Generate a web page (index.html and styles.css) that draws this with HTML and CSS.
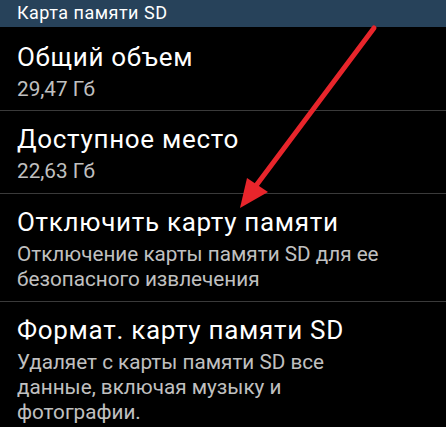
FILE: index.html
```html
<!DOCTYPE html>
<html lang="ru">
<head>
<meta charset="utf-8">
<link rel="stylesheet" href="styles.css">
</head>
<body>
<div class="screen">
  <div class="header">Карта памяти SD</div>
  <div class="list">
    <div class="item first">
      <div class="title">Общий объем</div>
      <div class="sub">29,47 Гб</div>
    </div>
    <div class="item">
      <div class="title">Доступное место</div>
      <div class="sub">22,63 Гб</div>
    </div>
    <div class="item">
      <div class="title">Отключить карту памяти</div>
      <div class="sub">Отключение карты памяти SD для ее<br>безопасного извлечения</div>
    </div>
    <div class="item last">
      <div class="title">Формат. карту памяти SD</div>
      <div class="sub">Удаляет с карты памяти SD все<br>данные, включая музыку и<br>фотографии.</div>
    </div>
  </div>
  <svg class="arrow" width="446" height="427" viewBox="0 0 446 427">
    <line x1="374" y1="28" x2="255" y2="187" stroke="#e8252b" stroke-width="5" stroke-linecap="round"/>
    <polygon points="240,208 247,178 268,192" fill="#e8252b"/>
  </svg>
</div>
</body>
</html>
```
FILE: styles.css
```css
html, body {
  margin: 0;
  padding: 0;
  background: #000;
}
.screen {
  position: relative;
  width: 446px;
  height: 427px;
  overflow: hidden;
  background: #000;
  font-family: Roboto, "Noto Sans", sans-serif;
}
.header {
  height: 27px;
  background: #27425a;
  color: #fff;
  font-size: 18px;
  letter-spacing: 0.5px;
  line-height: 25px;
  padding-left: 17px;
}
.list {
  display: flex;
  flex-direction: column;
}
.item {
  padding: 13px 17px 9px;
  border-bottom: 1px solid #3a3a3a;
}
.item.first {
  padding-top: 15px;
  padding-bottom: 8px;
}
.item.last {
  border-bottom: none;
}
.title {
  color: #fff;
  font-size: 26px;
  letter-spacing: 0.7px;
  line-height: 30px;
}
.sub {
  margin-top: 5px;
  color: #c0c0c0;
  font-size: 20.7px;
  line-height: 25px;
}
.arrow {
  position: absolute;
  left: 0;
  top: 0;
  pointer-events: none;
}
```
